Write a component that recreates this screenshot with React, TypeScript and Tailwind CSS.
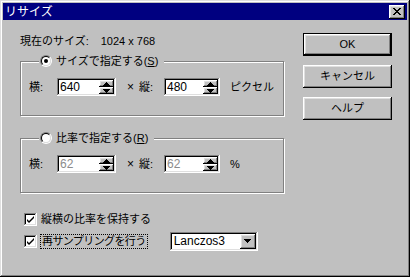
const RAISED =
  'shadow-[inset_-1px_-1px_#000,inset_1px_1px_#fff,inset_-2px_-2px_#808080,inset_2px_2px_#dfdfdf]';
const SUNKEN =
  'shadow-[inset_-1px_-1px_#fff,inset_1px_1px_#808080,inset_-2px_-2px_#dfdfdf,inset_2px_2px_#000]';

function Tri({ up, gray }: { up?: boolean; gray?: boolean }) {
  return (
    <svg width="7" height="4" viewBox="0 0 7 4" className="block">
      <path
        d={up ? 'M3 0h1v1h1v1h1v1h1v1H0V3h1V2h1V1h1z' : 'M0 0h7v1H6v1H5v1H4v1H3V3H2V2H1V1H0z'}
        fill={gray ? '#808080' : '#000'}
      />
    </svg>
  );
}

function SpinBox({ value, width, disabled }: { value: string; width: string; disabled?: boolean }) {
  return (
    <div className={`flex h-[18px] items-stretch bg-white p-[2px] ${width} ${SUNKEN}`}>
      <span
        className={`flex-1 pl-[1px] text-[12px] leading-[14px] ${disabled ? 'text-[#8c8c8c]' : 'text-black'}`}
      >
        {value}
      </span>
      <div className="flex w-[15px] flex-col">
        <div className={`flex h-[7px] items-center justify-center bg-[#c0c0c0] ${RAISED}`}>
          <Tri up />
        </div>
        <div className={`flex h-[7px] items-center justify-center bg-[#c0c0c0] ${RAISED}`}>
          <Tri />
        </div>
      </div>
    </div>
  );
}

function Radio({ checked }: { checked?: boolean }) {
  return (
    <span className="flex h-[12px] w-[12px] rounded-full border border-b-white border-l-[#808080] border-r-white border-t-[#808080]">
      <span className="flex flex-1 items-center justify-center rounded-full border border-b-[#dfdfdf] border-l-black border-r-[#dfdfdf] border-t-black bg-white">
        {checked ? <span className="h-[4px] w-[4px] rounded-full bg-black" /> : null}
      </span>
    </span>
  );
}

function Checkbox() {
  return (
    <span className={`flex h-[13px] w-[13px] items-center justify-center bg-white ${SUNKEN}`}>
      <svg width="7" height="7" viewBox="0 0 7 7" className="block">
        <path d="M0 2l2 2 5-5v2L2 6 0 4z" fill="#000" transform="translate(0 1)" />
      </svg>
    </span>
  );
}

function Group({
  legend,
  checked,
  a,
  b,
  unit,
  disabled,
  className,
}: {
  legend: React.ReactNode;
  checked?: boolean;
  a: string;
  b: string;
  unit: string;
  disabled?: boolean;
  className?: string;
}) {
  return (
    <fieldset
      className={`w-[264px] border border-[#808080] px-[8px] pb-[19px] pt-[10px] shadow-[1px_1px_0_#fff,inset_1px_1px_0_#fff] ${className ?? ''}`}
    >
      <legend className="ml-[10px] flex items-center gap-[4px] bg-[#c0c0c0] px-[1px] pr-[6px] leading-[14px]">
        <Radio checked={checked} />
        <span>{legend}</span>
      </legend>
      <div className="flex h-[18px] items-center">
        <span className="w-[28px]">横:</span>
        <SpinBox value={a} width="w-[59px]" disabled={disabled} />
        <span className="ml-[11px] w-[12px] text-[12px]">×</span>
        <span className="w-[25px]">縦:</span>
        <SpinBox value={b} width="w-[56px]" disabled={disabled} />
        <span className="ml-[10px]">{unit}</span>
      </div>
    </fieldset>
  );
}

function Btn({ children, isDefault }: { children: React.ReactNode; isDefault?: boolean }) {
  return (
    <div
      className={`flex h-[23px] w-[89px] items-center justify-center bg-[#c0c0c0] ${
        isDefault ? 'border border-black' : ''
      }`}
    >
      <div className={`flex h-full w-full items-center justify-center ${RAISED}`}>{children}</div>
    </div>
  );
}

export default function App() {
  return (
    <div
      className={`flex h-[277px] w-[410px] select-none flex-col bg-[#c0c0c0] p-[3px] text-[11px] text-black ${'shadow-[inset_-1px_-1px_#000,inset_1px_1px_#dfdfdf,inset_-2px_-2px_#808080,inset_2px_2px_#fff]'}`}
      style={{ fontFamily: '"Liberation Sans", "Noto Sans CJK JP", sans-serif' }}
    >
      <div className="flex h-[17px] items-center justify-between bg-[#000080] pl-[2px] pr-[2px]">
        <span className="text-[12px] leading-[16px] text-white">リサイズ</span>
        <div className={`flex h-[14px] w-[16px] items-center justify-center bg-[#c0c0c0] ${RAISED}`}>
          <svg width="8" height="7" viewBox="0 0 8 7" className="block">
            <path
              d="M0 0h2v1h1v1h2V1h1V0h2v1H7v1H6v1H5v1h1v1h1v1h1v1H6V6H5V5H3v1H2v1H0V6h1V5h1V4h1V3H2V2H1V1H0z"
              fill="#000"
            />
          </svg>
        </div>
      </div>

      <div className="flex flex-1 pl-[17px] pt-[13px]">
        <div className="flex w-[264px] flex-col">
          <div className="flex h-[16px] items-center">
            <span>現在のサイズ:</span>
            <span className="ml-[12px]">1024 x 768</span>
          </div>

          <Group
            className="mt-[5px]"
            legend={
              <>
                サイズで指定する(<span className="underline">S</span>)
              </>
            }
            checked
            a="640"
            b="480"
            unit="ピクセル"
          />

          <Group
            className="mt-[15px]"
            legend={
              <>
                比率で指定する(<span className="underline">R</span>)
              </>
            }
            a="62"
            b="62"
            unit="%"
            disabled
          />

          <div className="ml-[4px] mt-[18px] flex h-[16px] items-center gap-[4px]">
            <Checkbox />
            <span>縦横の比率を保持する</span>
          </div>

          <div className="ml-[4px] mt-[4px] flex h-[20px] items-center">
            <Checkbox />
            <span className="ml-[3px] border border-dotted border-black px-[1px] leading-[13px] tracking-[-0.6px]">
              再サンプリングを行う
            </span>
            <div className={`ml-[22px] flex h-[19px] w-[88px] items-stretch bg-white p-[2px] ${SUNKEN}`}>
              <span className="flex-1 pl-[2px] text-[12px] leading-[15px]">Lanczos3</span>
              <div className={`flex w-[16px] items-center justify-center bg-[#c0c0c0] ${RAISED}`}>
                <Tri />
              </div>
            </div>
          </div>
        </div>

        <div className="ml-[19px] flex flex-col gap-[9px]">
          <Btn isDefault>OK</Btn>
          <Btn>キャンセル</Btn>
          <Btn>ヘルプ</Btn>
        </div>
      </div>
    </div>
  );
}
